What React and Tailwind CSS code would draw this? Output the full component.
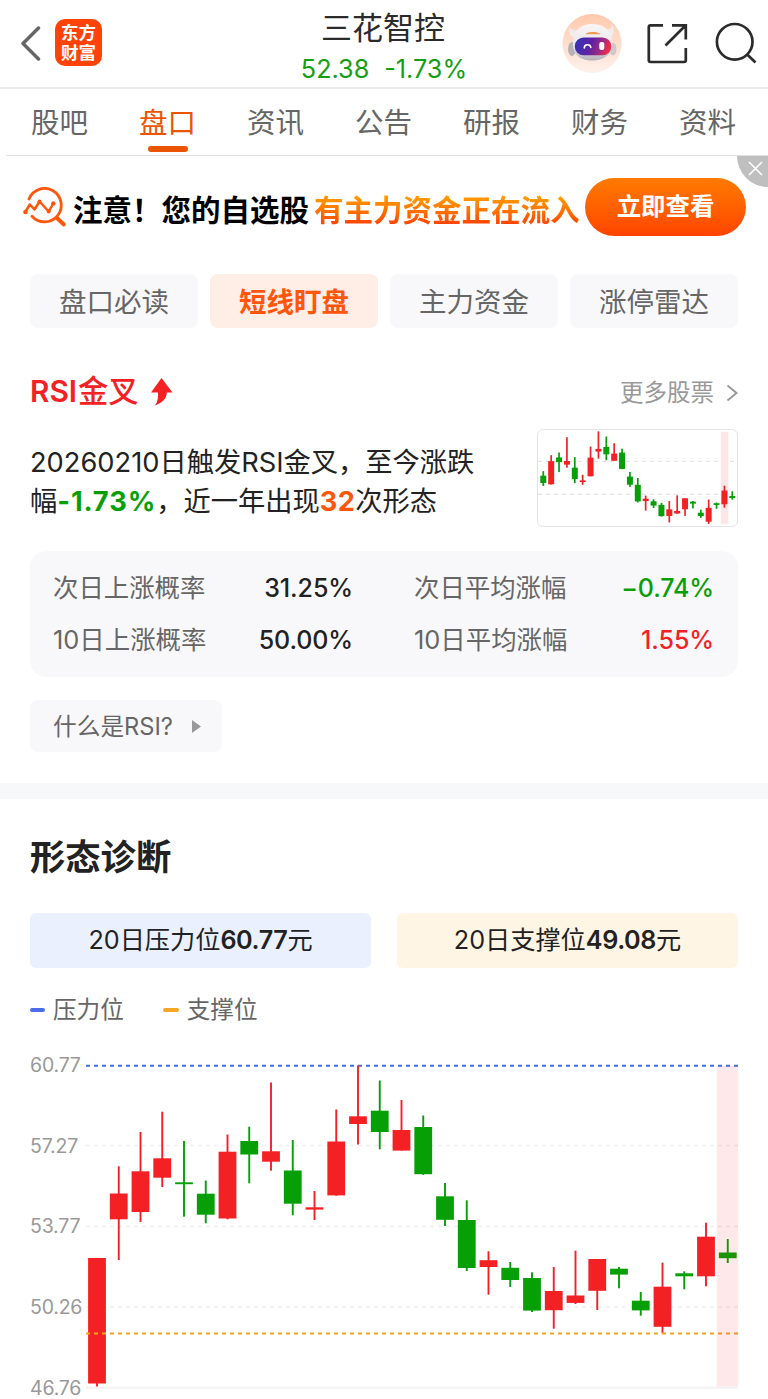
import React from 'react';
import clsx from 'clsx';

const RED = '#f32124';
const GREEN = '#06a006';

const TABS = ['股吧', '盘口', '资讯', '公告', '研报', '财务', '资料'];
const FILTERS = ['盘口必读', '短线盯盘', '主力资金', '涨停雷达'];
const AXIS = ['60.77', '57.27', '53.77', '50.26', '46.76'];

// [direction, high, body top, body bottom, low] in chart units
const CANDLES = [
  ['up', 218, 218, 343.5, 346.5],
  ['up', 126.3, 153.5, 179.3, 220],
  ['up', 92, 131.3, 172, 182],
  ['up', 71.7, 118.3, 137.7, 147],
  ['down', 101, 142.3, 144.2, 176.7],
  ['down', 140.5, 153.7, 174.7, 183.3],
  ['up', 94.5, 111.7, 178.5, 179.3],
  ['down', 86.7, 101, 114.5, 143.3],
  ['up', 42.5, 111.3, 121.7, 130.7],
  ['down', 100, 130.5, 163.7, 175.3],
  ['up', 151, 167.3, 169.6, 180],
  ['up', 69.5, 101.5, 155.4, 155.7],
  ['up', 25.5, 76.3, 84, 104.5],
  ['down', 40.5, 70.7, 92, 109.3],
  ['up', 60, 90, 110.6, 110.6],
  ['down', 75.5, 87, 134.2, 134.8],
  ['down', 143, 156.3, 179.8, 186],
  ['down', 160.3, 180, 228, 231],
  ['up', 211.3, 220.2, 227, 254.7],
  ['down', 222, 227.8, 240, 247],
  ['down', 232.3, 238, 270.6, 272],
  ['up', 227, 251, 270.2, 288.7],
  ['up', 210.7, 255.5, 262.9, 264],
  ['up', 219, 219, 250.8, 270],
  ['down', 227, 228.7, 234.6, 248.3],
  ['down', 252, 260.7, 270.4, 275.7],
  ['up', 222.7, 246.7, 286.8, 293.3],
  ['down', 231.3, 233.3, 236.3, 249.3],
  ['up', 182.7, 196.7, 236.3, 246.3],
  ['down', 199, 212.5, 218.2, 223],
];

function Candles({ items, x0, step, width, wick, scale = 1, offset = 0 }) {
  return items.map(([dir, high, top, bottom, low], i) => {
    const cx = x0 + i * step;
    const y = (v) => v * scale + offset;
    return (
      <g key={i} fill={dir === 'up' ? RED : GREEN}>
        <rect x={cx - wick / 2} y={y(high)} width={wick} height={y(low) - y(high)} />
        <rect x={cx - width / 2} y={y(top)} width={width} height={Math.max(y(bottom) - y(top), wick)} />
      </g>
    );
  });
}

function Logo() {
  return (
    <div className="ml-[13px] flex h-[47px] w-[47px] flex-col items-center justify-center rounded-[10px] bg-[#ff4208] pt-px text-[17.500px] leading-[20px] font-bold text-white">
      <span>东方</span>
      <span>财富</span>
    </div>
  );
}

function Robot() {
  return (
    <svg width="60" height="61" viewBox="0 0 60 61">
      <defs>
        <linearGradient id="halo" x1="0" y1="0" x2="0" y2="1">
          <stop offset="0" stopColor="#ffc9ab" />
          <stop offset="1" stopColor="#fff1ec" />
        </linearGradient>
        <linearGradient id="visor" x1="0" y1="0" x2="1" y2="0.2">
          <stop offset="0" stopColor="#2f35b8" />
          <stop offset="0.5" stopColor="#5e22a4" />
          <stop offset="0.8" stopColor="#a42a80" />
          <stop offset="1" stopColor="#e8304a" />
        </linearGradient>
        <linearGradient id="shell" x1="0" y1="0" x2="0" y2="1">
          <stop offset="0" stopColor="#faf6f5" />
          <stop offset="0.6" stopColor="#ebe6e8" />
          <stop offset="1" stopColor="#b5b1bb" />
        </linearGradient>
      </defs>
      <circle cx="30" cy="30.500" r="29.500" fill="url(#halo)" />
      <path d="M7.500 14c-1.500 5 1 9.500 5 11l4.500-8c-4 1-7.500 0-9.500-3zM50.500 12.500c2.500 5 1.500 10-3 12.500l-4.500-8c4 0 6.500-1.500 7.500-4.500z" fill="#f1ecec" />
      <ellipse cx="10" cy="36" rx="4" ry="7" fill="#b7b2ba" />
      <ellipse cx="51" cy="36" rx="3.500" ry="6.500" fill="#cdc8ce" />
      <path d="M30 11c-10 0-16.500 5-18.500 14-2.500 13 3 22.500 18.500 22.500s22-9.500 20-22.500C48.500 16 40 11 30 11z" fill="url(#shell)" />
      <rect x="12.800" y="24.500" width="36.500" height="17.800" rx="8.700" fill="url(#visor)" />
      <path d="M23.500 21.300c1-3 12-3 14.500-.8v.8z" fill="#ee9a4e" />
      <path d="M22.300 35c0-4.300 6-4.300 6.500-.5" fill="none" stroke="#fff" strokeWidth="1.600" strokeLinecap="round" />
      <rect x="37.300" y="29" width="5" height="8" rx="2" fill="#fff" />
    </svg>
  );
}

function Header() {
  return (
    <header className="flex h-[89px] items-start border-b-2 border-[#ececec]">
      <div className="flex w-[262px] items-center pt-[19px] pl-[20px]">
        <svg width="22" height="36" viewBox="0 0 22 36" fill="none" stroke="#666" strokeWidth="3.500" strokeLinecap="round" strokeLinejoin="round">
          <path d="M18.500 9.500L3 25L18.500 40.500" transform="translate(0 -6.500)" />
        </svg>
        <Logo />
      </div>
      <div className="flex w-[244px] flex-col items-center">
        <h1 className="mt-[5px] h-[46px] pr-[2px] text-[31px] leading-[46px] text-[#2b2b2b]">三花智控</h1>
        <div className="flex h-[36px] gap-[15px] text-[25.200px] leading-[36px] text-[#12a012]">
          <span>52.38</span>
          <span>-1.73%</span>
        </div>
      </div>
      <div className="flex pt-[13px] pl-[56px]">
        <Robot />
        <svg className="mt-[10px] ml-[25px]" width="42" height="42" viewBox="0 0 42 42" fill="none" stroke="#2b2b2b" strokeWidth="2.700">
          <path d="M16 2.300H3.600Q1.800 2.300 1.800 4.100V37.300Q1.800 39 3.600 39H37Q38.800 39 38.800 37.300V25" />
          <path d="M25 2.300H38.800V16.500M38.500 2.500L18.500 22.500" />
        </svg>
        <svg className="mt-[9px] ml-[25px]" width="43" height="43" viewBox="0 0 43 43" fill="none" stroke="#2b2b2b" strokeWidth="2.700">
          <circle cx="20.700" cy="19.800" r="17.800" />
          <path d="M32.700 32L41.500 40.500" />
        </svg>
      </div>
    </header>
  );
}

function Banner() {
  return (
    <section className="relative flex h-[118px] items-start pl-[23px]">
      <svg className="mt-[31px]" width="44" height="42" viewBox="0 0 44 42" fill="none" stroke="#ff560c" strokeWidth="2.800" strokeLinecap="round" strokeLinejoin="round">
        <path d="M6 12A16.700 16.700 0 1 1 9 29.200" />
        <path d="M34.500 31.500L40.800 37.500" strokeWidth="3.800" />
        <path d="M2.300 25L6.800 17.500L11.500 22.500L16.500 14.500L25.700 24.500L30.300 16.500" strokeWidth="2.500" />
        <g fill="#ff560c" stroke="none">
          <circle cx="2.500" cy="25" r="2.300" />
          <circle cx="16.500" cy="14.500" r="2" />
          <circle cx="25.700" cy="24.500" r="2" />
          <circle cx="30.300" cy="16.500" r="2.200" />
        </g>
      </svg>
      <p className="mt-[32px] ml-[6px] flex h-[44px] items-center text-[29.500px] leading-[44px] font-bold whitespace-nowrap">
        <span className="text-black">注意！您的自选股</span>
        <span className="ml-[5px] bg-linear-to-b from-[#ff9a00] from-20% to-[#ff4600] to-80% bg-clip-text text-transparent">
          有主力资金正在流入
        </span>
      </p>
      <button className="mt-[22px] ml-auto mr-[22px] h-[58px] w-[161px] shrink-0 rounded-full bg-linear-to-b from-[#ff7a00] to-[#ff4200] pb-[2px] text-[24.400px] font-bold text-white">
        立即查看
      </button>
      <div className="absolute top-0 right-0 h-[31px] w-[31px] rounded-bl-[31px] bg-[#bfbfbf]">
        <svg className="mt-[5px] ml-[11px]" width="15" height="15" viewBox="0 0 15 15" stroke="#fff" strokeWidth="1.600">
          <path d="M1 1L14 14M14 1L1 14" />
        </svg>
      </div>
    </section>
  );
}

function MiniChart() {
  return (
    <div className="h-[98px] w-[201px] overflow-hidden rounded-[6px] border border-[#e4e4e6]">
      <svg width="199" height="96" viewBox="538 430 199 96">
        <path d="M538 461.300H738M538 494.300H738" stroke="#dedede" strokeWidth="1" strokeDasharray="4 4" />
        <rect x="720.700" y="431.700" width="7.700" height="92.500" fill="#fde6e7" />
        <Candles items={CANDLES.slice(5)} x0={543.3} step={7.875} width={6} wick={1.7} scale={0.346} offset={422.5} />
      </svg>
    </div>
  );
}

function Stat({ label, value, className }) {
  return (
    <div className="flex h-[52px] items-center justify-between">
      <span className="text-[25.400px] text-[#666]">{label}</span>
      <span className={clsx('text-[25px] font-medium tracking-[-0.1px]', className)}>{value}</span>
    </div>
  );
}

function SignalSection() {
  return (
    <section className="h-[455px] px-[30px]">
      <div className="flex h-[45px] items-center justify-between">
        <h2 className="flex items-center font-medium text-[#f32124]">
          <span className="text-[29.800px] font-semibold">RSI</span>
          <span className="ml-px text-[30.300px]">金叉</span>
          <svg className="ml-[11px]" width="24" height="28" viewBox="0 0 24 28" fill="#f32124">
            <path d="M11.500 0L22.500 14.500H16.800C16.800 20 13 24.500 5 27.500C8 23.500 8.200 19 8 14.500H1Z" />
          </svg>
        </h2>
        <a className="flex items-center pt-[2px] text-[23.500px] text-[#999]">
          更多股票
          <svg className="ml-[12px]" width="12" height="18" viewBox="0 0 12 18" fill="none" stroke="#999" strokeWidth="1.900">
            <path d="M1.500 1.500L10.500 9L1.500 16.500" />
          </svg>
        </a>
      </div>

      <div className="mt-[15px] flex h-[98px] justify-between">
        <p className="mt-[14px] w-[470px] text-[27.250px] leading-[39px] whitespace-nowrap text-[#222]">
          20260210日触发RSI金叉，至今涨跌
          <br />
          幅<b className="font-bold tracking-[0.900px] text-[#06a006]">-1.73%</b>，近一年出现
          <b className="font-bold tracking-[0.400px] text-[#ff560c]">32</b>次形态
        </p>
        <MiniChart />
      </div>

      <div className="mt-[24px] grid h-[126px] grid-cols-[300px_300px] content-center justify-between rounded-[16px] bg-[#f8f8fb] pt-px pr-[24px] pl-[23px]">
        <Stat label="次日上涨概率" value="31.25%" className="text-[#222]" />
        <Stat label="次日平均涨幅" value="−0.74%" className="text-[#06a006]" />
        <Stat label="10日上涨概率" value="50.00%" className="text-[#222]" />
        <Stat label="10日平均涨幅" value="1.55%" className="text-[#f32124]" />
      </div>

      <button className="mt-[23px] flex h-[52px] w-[192px] items-center rounded-[8px] bg-[#f8f8fb] pt-px pl-[23px] text-[23.700px] text-[#666]">
        什么是RSI?
        <svg className="ml-[19px]" width="9" height="13" viewBox="0 0 9 13" fill="#999">
          <path d="M0 0L9 6.500L0 13Z" />
        </svg>
      </button>
    </section>
  );
}

function PatternChart() {
  return (
    <div className="flex h-[359px]">
      <div className="flex w-[56px] shrink-0 flex-col pt-[10px] text-[19.500px] leading-[30px] tracking-[-0.200px] text-[#999]">
        {AXIS.map((label) => (
          <div key={label} className="h-[80.650px] shrink-0">{label}</div>
        ))}
      </div>
      <svg className="shrink-0" width="653" height="359" viewBox="86 0 653 359">
        <path d="M86 105.500H738M86 186.500H738M86 267H738" stroke="#efefef" strokeWidth="1.300" strokeDasharray="4 4" />
        <path d="M86 347.800H738" stroke="#f2f2f2" strokeWidth="2" />
        <path d="M86 25.700H738" stroke="#4169e1" strokeWidth="2" strokeDasharray="4 4" />
        <Candles items={CANDLES} x0={97} step={21.75} width={17.8} wick={1.9} />
        <path d="M86 293.500H738" stroke="#eea61c" strokeWidth="2" strokeDasharray="4 4" />
        <rect x="716.700" y="26" width="21.500" height="320.500" fill="#f32124" fillOpacity="0.1" />
      </svg>
    </div>
  );
}

function DiagnosisSection() {
  return (
    <section className="px-[30px] pt-[33px] text-[#222]">
      <h2 className="h-[52px] text-[35.300px] leading-[52px] font-bold">形态诊断</h2>
      <div className="mt-[29px] grid h-[55px] grid-cols-2 gap-[26px] text-[25.200px] leading-[55px]">
        <div className="h-[55px] rounded-[6px] bg-[#ebf0fe] text-center">
          20日压力位<b className="font-semibold tracking-[-0.400px]">60.77</b>元
        </div>
        <div className="h-[55px] rounded-[6px] bg-[#fff5e5] text-center">
          20日支撑位<b className="font-semibold tracking-[-0.400px]">49.08</b>元
        </div>
      </div>
      <div className="mt-[24px] flex h-[36px] gap-[39px] text-[23.600px] leading-[38px] text-[#666]">
        <div className="flex items-center gap-[8px]">
          <i className="h-[4px] w-[15px] rounded-full bg-[#4b6ee8]" />
          压力位
        </div>
        <div className="flex items-center gap-[8px]">
          <i className="h-[4px] w-[16px] rounded-full bg-[#f5a623]" />
          支撑位
        </div>
      </div>
      <div className="mt-[12px]">
        <PatternChart />
      </div>
    </section>
  );
}

export default function App() {
  return (
    <div className="h-[1399px] w-[768px] overflow-hidden bg-white font-['Inter','Noto_Sans_CJK_SC',sans-serif]">
      <Header />

      <nav className="ml-[6px] flex h-[67px] border-b border-[#e2e2e2] pr-[6px]">
        {TABS.map((tab, i) => (
          <div
            key={tab}
            className={clsx(
              'flex flex-1 flex-col items-center text-[28.500px] leading-[42px]',
              i === 1 ? 'text-[#ea5504]' : 'text-[#666]'
            )}
          >
            <span className="mt-[13px] pr-px">{tab}</span>
            {i === 1 && <span className="mt-[2px] h-[6px] w-[40px] shrink-0 rounded-full bg-[#ea5504]" />}
          </div>
        ))}
      </nav>

      <Banner />

      <div className="grid h-[54px] grid-cols-4 gap-[12px] px-[30px]">
        {FILTERS.map((name, i) => (
          <button
            key={name}
            className={clsx(
              'rounded-[8px] pt-[4px] text-[27.500px]',
              i === 1 ? 'bg-[#ffeee5] font-bold text-[#ff560c]' : 'bg-[#f8f8fb] text-[#666]'
            )}
          >
            {name}
          </button>
        ))}
      </div>

      <div className="h-[41px]" />
      <SignalSection />
      <div className="-mt-[41px] h-[16px] bg-[#f7f8fa]" />
      <DiagnosisSection />
    </div>
  );
}
